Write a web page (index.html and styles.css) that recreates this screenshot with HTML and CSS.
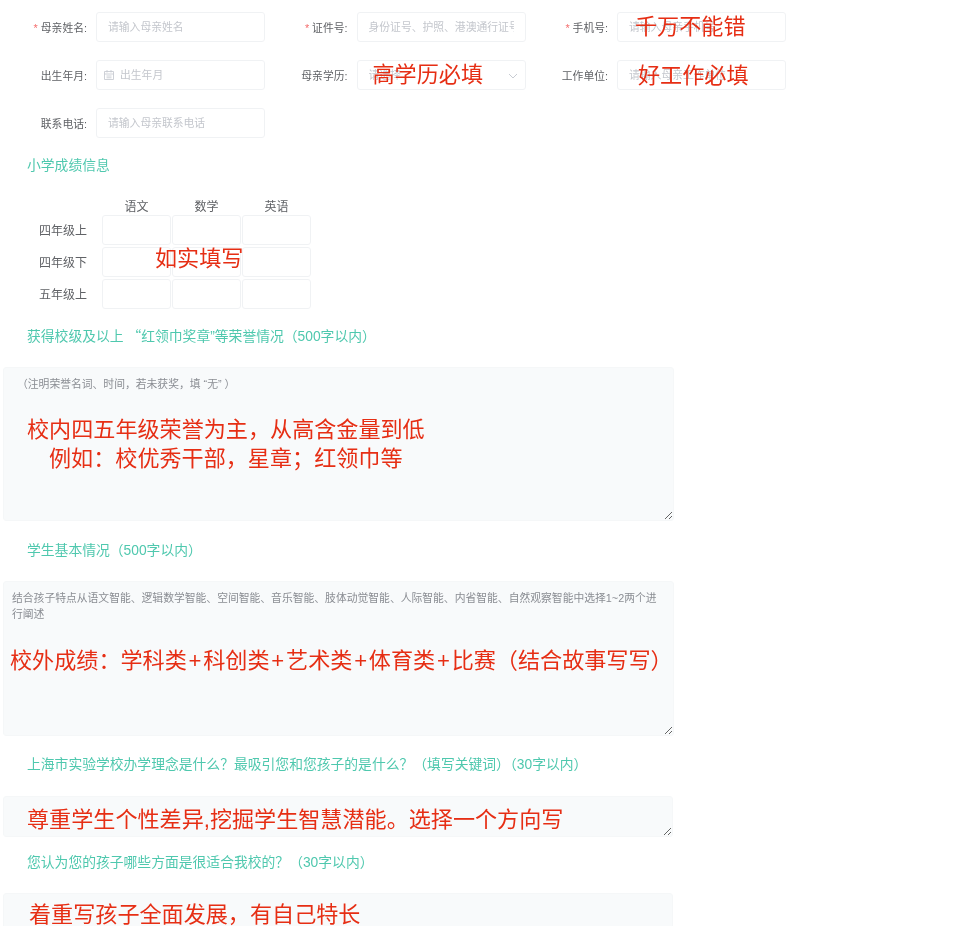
FILE: index.html
```html
<!DOCTYPE html>
<html lang="zh">

<head>
    <meta charset="UTF-8"/>
    <title>报名表</title>
    <link rel="stylesheet" href="styles.css">
</head>

<body>
<form class="page">
    <div class="row">
        <div class="field">
            <label><i>*</i> 母亲姓名:</label>
            <div class="control"><input type="text" placeholder="请输入母亲姓名"/></div>
        </div>
        <div class="field">
            <label><i>*</i> 证件号:</label>
            <div class="control"><input type="text" placeholder="身份证号、护照、港澳通行证号"/></div>
        </div>
        <div class="field">
            <label><i>*</i> 手机号:</label>
            <div class="control">
                <input type="text" placeholder="请输入母亲手机号"/>
                <span class="note note-phone">千万不能错</span>
            </div>
        </div>
    </div>
    <div class="row">
        <div class="field">
            <label>出生年月:</label>
            <div class="control">
                <svg class="icon-date" viewBox="0 0 12 12" width="12" height="12">
                    <path d="M1.5 2.5h9v8h-9zM1.5 5h9M4 1v2.5M8 1v2.5M3.5 7h5M3.5 8.8h5" fill="none" stroke="#c8ccd3" stroke-width="0.9"/>
                </svg>
                <input type="text" class="date" placeholder="出生年月"/>
            </div>
        </div>
        <div class="field">
            <label>母亲学历:</label>
            <div class="control">
                <input type="text" placeholder="请选择"/>
                <svg class="icon-arrow" viewBox="0 0 10 6" width="10" height="6">
                    <path d="M1 1l4 4 4-4" fill="none" stroke="#c8ccd3" stroke-width="1"/>
                </svg>
                <span class="note note-edu">高学历必填</span>
            </div>
        </div>
        <div class="field">
            <label>工作单位:</label>
            <div class="control">
                <input type="text" placeholder="请输入母亲工作单位"/>
                <span class="note note-work">好工作必填</span>
            </div>
        </div>
    </div>
    <div class="row">
        <div class="field">
            <label>联系电话:</label>
            <div class="control"><input type="text" placeholder="请输入母亲联系电话"/></div>
        </div>
    </div>

    <h2 class="title-score">小学成绩信息</h2>
    <div class="score">
        <span></span><b>语文</b><b>数学</b><b>英语</b>
        <span>四年级上</span><input type="text"/><input type="text"/><input type="text"/>
        <span>四年级下</span><input type="text"/><input type="text"/><input type="text"/>
        <span>五年级上</span><input type="text"/><input type="text"/><input type="text"/>
        <em class="note note-score">如实填写</em>
    </div>

    <h2 class="title-honor">获得校级及以上 <span class="quote">“</span>红领巾奖章”等荣誉情况（500字以内）</h2>
    <div class="area area-honor">
        <textarea placeholder="（注明荣誉名词、时间，若未获奖，填 “无” ）"></textarea>
        <p class="note note-honor">校内四五年级荣誉为主，从高含金量到低<br><span>例如：校优秀干部，星章；红领巾等</span></p>
    </div>

    <h2 class="title-basic">学生基本情况（500字以内）</h2>
    <div class="area area-basic">
        <textarea placeholder="结合孩子特点从语文智能、逻辑数学智能、空间智能、音乐智能、肢体动觉智能、人际智能、内省智能、自然观察智能中选择1~2两个进行阐述"></textarea>
        <p class="note note-basic">校外成绩：学科类<span class="plus">+</span>科创类<span class="plus">+</span>艺术类<span class="plus">+</span>体育类<span class="plus">+</span>比赛（结合故事写写）</p>
    </div>

    <h2 class="title-idea">上海市实验学校办学理念是什么？最吸引您和您孩子的是什么？（填写关键词）（30字以内）</h2>
    <div class="area area-idea">
        <textarea></textarea>
        <p class="note note-idea">尊重学生个性差异,挖掘学生智慧潜能。选择一个方向写</p>
    </div>

    <h2 class="title-fit">您认为您的孩子哪些方面是很适合我校的？（30字以内）</h2>
    <div class="area area-fit">
        <textarea></textarea>
        <p class="note note-fit">着重写孩子全面发展，有自己特长</p>
    </div>
</form>
</body>

</html>
```

FILE: styles.css
```css
* {
    margin: 0;
    padding: 0;
    box-sizing: border-box;
}

html,
body {
    height: 926px;
    overflow: hidden;
    background: #fff;
}

body {
    font-family: "Liberation Sans", "Noto Sans CJK SC", sans-serif;
    color: #606266;
}

.page {
    height: 926px;
    overflow: hidden;
    padding-top: 12px;
    filter: blur(0.35px);
}

input,
textarea {
    font-family: inherit;
    outline: none;
}

input::placeholder,
textarea::placeholder {
    color: #c4c7cd;
    opacity: 1;
}

.row {
    display: flex;
    margin-bottom: 18px;
}

.field {
    display: flex;
    flex: none;
    align-items: center;
    width: 265px;
    margin-right: -4.5px;
}

.field label {
    flex: none;
    width: 87px;
    margin-right: 9px;
    text-align: right;
    font-size: 10.8px;
}

.field label i {
    color: #f56c6c;
    font-style: normal;
}

.control {
    position: relative;
    flex: none;
    width: 169px;
    height: 30px;
}

.control input {
    width: 100%;
    height: 100%;
    padding: 0 11px;
    font-size: 10.8px;
    border: 1px solid #f0f2f4;
    border-radius: 3px;
}

.control .date {
    padding-left: 23px;
}

.icon-date {
    position: absolute;
    left: 7px;
    top: 9px;
}

.icon-arrow {
    position: absolute;
    right: 8px;
    top: 13px;
}

.note {
    position: absolute;
    color: #e62e14;
    font-size: 22.1px;
    font-style: normal;
    line-height: 30px;
    white-space: nowrap;
}

.note-phone {
    left: 18px;
    top: 0;
}

.note-edu {
    left: 16px;
    top: 0;
}

.note-work {
    left: 21px;
    top: 1px;
}

h2 {
    margin: 0 0 -1px 27px;
    padding-top: 1px;
    font-size: 13.8px;
    font-weight: 400;
    line-height: 20px;
    color: #4fc8ae;
}

.title-score {
    margin-top: -1px;
}

.quote {
    font-family: "Noto Sans CJK SC", sans-serif;
    line-height: 0;
}

.score {
    position: relative;
    display: grid;
    grid-template-columns: 101px repeat(3, 69px);
    grid-template-rows: 16px repeat(3, 30px);
    column-gap: 1px;
    row-gap: 2px;
    margin-top: 22px;
    font-size: 12px;
}

.score span {
    align-self: center;
    margin-top: -2px;
    padding-right: 14px;
    text-align: right;
}

.score b {
    font-weight: 400;
    text-align: center;
}

.score input {
    width: 69px;
    height: 30px;
    border: 1px solid #f0f2f4;
    border-radius: 3px;
}

.note-score {
    left: 155px;
    top: 47px;
}

.title-honor {
    margin-top: 17px;
}

.area {
    position: relative;
    margin: 21px 0 0 3px;
    width: 671px;
}

.area textarea {
    display: block;
    width: 100%;
    height: 100%;
    padding: 8px 10px 8px 8px;
    font-size: 10.8px;
    line-height: 16px;
    color: #606266;
    background: #f8fafb;
    border: 1px solid #f5f7f8;
    border-radius: 3px;
    resize: vertical;
}

.area textarea::placeholder {
    color: #8a8d93;
}

.area-honor {
    height: 154px;
}

.area-honor textarea {
    padding-left: 13px;
}

.area-basic {
    height: 155px;
}

.area-idea {
    width: 670px;
    height: 41px;
    margin-top: 22px;
}

.area-fit {
    width: 670px;
    height: 100px;
}

.note-honor {
    left: 24px;
    top: 48px;
    line-height: 29px;
}

.note-honor span {
    margin-left: 22px;
}

.note-basic {
    left: 7px;
    top: 65px;
}

.plus {
    margin: 0 1.8px;
}

.note-idea {
    left: 24px;
    top: 9px;
}

.note-fit {
    left: 26px;
    top: 11px;
    line-height: 22px;
}

.title-basic {
    margin-top: 19px;
}

.title-idea {
    margin-top: 18px;
}

.title-fit {
    margin-top: 15px;
}
```
